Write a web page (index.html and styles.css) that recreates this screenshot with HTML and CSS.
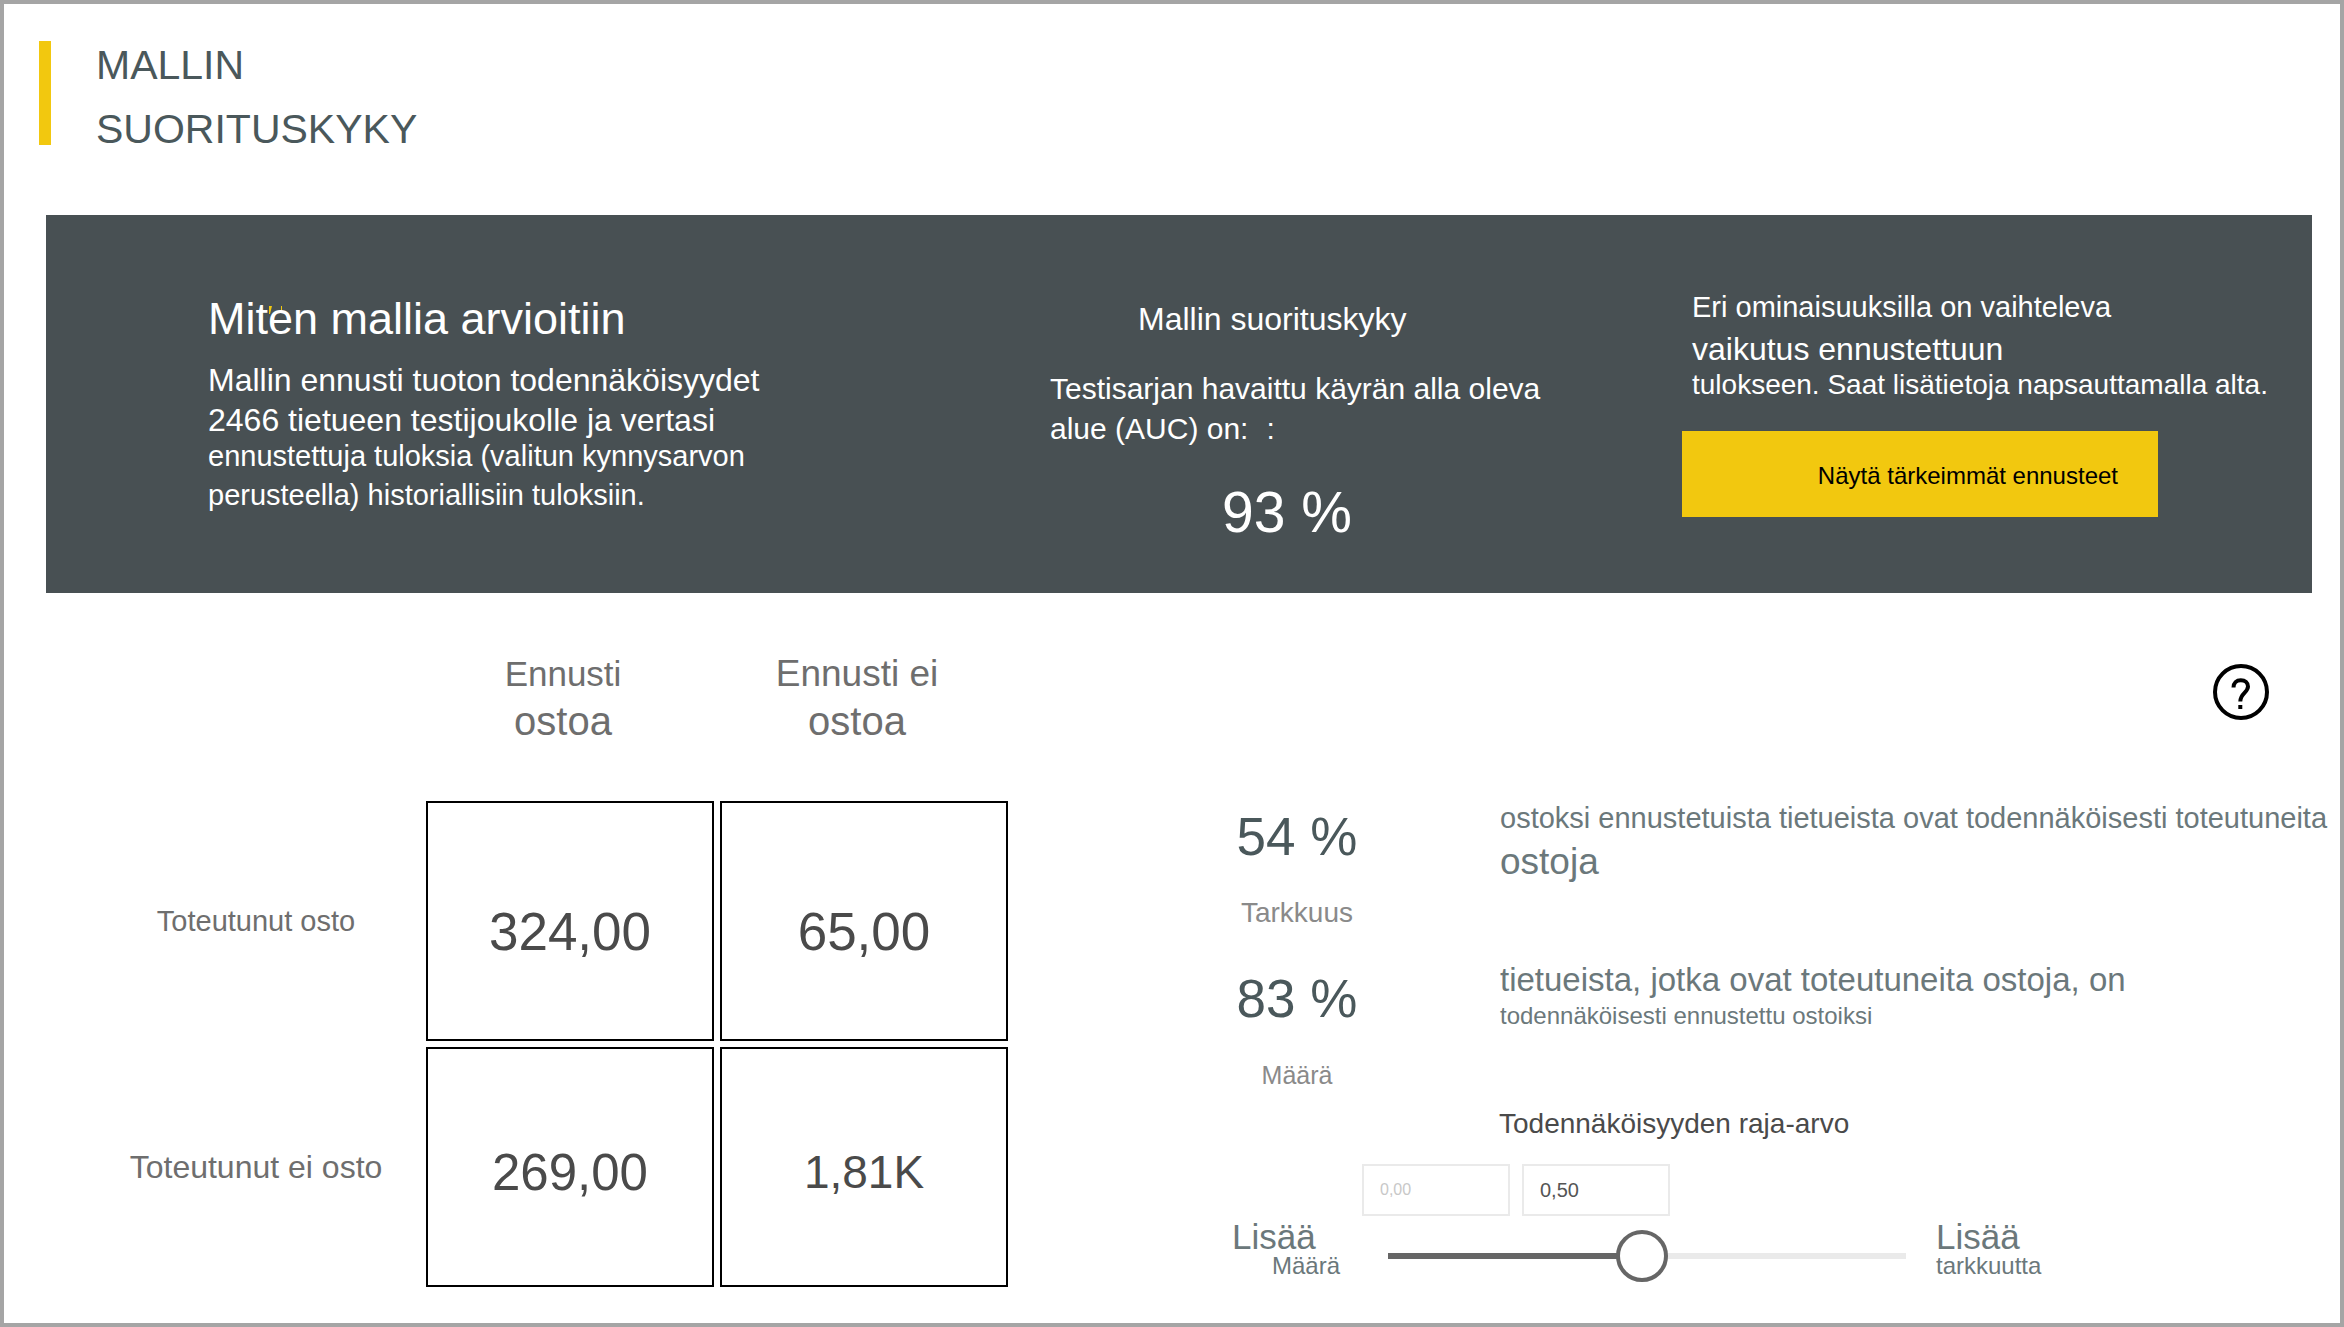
FILE: index.html
```html
<!DOCTYPE html>
<html lang="fi">
<head>
<meta charset="utf-8">
<meta name="viewport" content="width=device-width, initial-scale=1">
<title>Mallin suorituskyky</title>
<link rel="stylesheet" href="styles.css">
</head>
<body>
<div class="report">
  <header class="page-header">
    <h1 class="page-title"><span class="line">MALLIN</span><span class="line">SUORITUSKYKY</span></h1>
  </header>

  <section class="summary">
    <div class="summary-col summary-method">
      <h2 class="method-title">Miten mallia arvioitiin
        <svg class="spark" viewBox="0 0 14 9" aria-hidden="true"><path d="M0 0h3L1 8H0zM12 0h1v4h-1z" fill="#f2c80f"/></svg>
      </h2>
      <p class="method-text">
        <span class="line lead">Mallin ennusti tuoton todennäköisyydet</span>
        <span class="line lead">2466 tietueen testijoukolle ja vertasi</span>
        <span class="line tight">ennustettuja tuloksia (valitun kynnysarvon</span>
        <span class="line loose">perusteella) historiallisiin tuloksiin.</span>
      </p>
    </div>
    <div class="summary-col summary-auc">
      <h2 class="auc-title">Mallin suorituskyky</h2>
      <p class="auc-text"><span class="line">Testisarjan havaittu käyrän alla oleva</span><span class="line">alue (AUC) on:<span class="auc-colon">:</span></span></p>
      <p class="auc-value">93 %</p>
    </div>
    <div class="summary-col summary-features">
      <p class="features-text">
        <span class="line first">Eri ominaisuuksilla on vaihteleva</span>
        <span class="line second">vaikutus ennustettuun</span>
        <span class="line third">tulokseen. Saat lisätietoja napsauttamalla alta.</span>
      </p>
      <button class="features-button" type="button">Näytä tärkeimmät ennusteet</button>
    </div>
  </section>

  <main class="details">
    <table class="matrix">
      <colgroup><col><col class="value-col"><col class="value-col"></colgroup>
      <thead>
        <tr>
          <td></td>
          <th scope="col"><span class="line">Ennusti</span><span class="line sub">ostoa</span></th>
          <th scope="col"><span class="line wide">Ennusti ei</span><span class="line sub">ostoa</span></th>
        </tr>
      </thead>
      <tbody>
        <tr class="row-positive"><th scope="row">Toteutunut osto</th><td>324,00</td><td>65,00</td></tr>
        <tr class="row-negative"><th scope="row">Toteutunut ei osto</th><td>269,00</td><td class="compact">1,81K</td></tr>
      </tbody>
    </table>

    <section class="quality">
      <button class="help" type="button" aria-label="Ohje">
        <svg viewBox="0 0 56 56" fill="none" stroke="#000" aria-hidden="true">
          <circle cx="28" cy="28" r="26" stroke-width="4"/>
          <path d="M20.500 23.500C20.500 19 23.500 16.300 27.800 16.300C32.200 16.300 35 19 35 22.600C35 28.500 27.300 29 27.300 37.600" stroke-width="4"/>
          <path d="M27.300 41v4" stroke-width="4"/>
        </svg>
      </button>

      <div class="metrics">
        <div class="metric"><strong class="metric-value">54 %</strong><span class="metric-name">Tarkkuus</span></div>
        <p class="metric-text"><span class="line small">ostoksi ennustetuista tietueista ovat todennäköisesti toteutuneita</span><span class="line large">ostoja</span></p>
        <div class="metric"><strong class="metric-value">83 %</strong><span class="metric-name short">Määrä</span></div>
        <p class="metric-text"><span class="line medium">tietueista, jotka ovat toteutuneita ostoja, on</span><span class="line tiny">todennäköisesti ennustettu ostoiksi</span></p>
      </div>

      <label class="threshold-label" for="threshold">Todennäköisyyden raja-arvo</label>
      <div class="range-inputs">
        <input class="range-input from" type="text" value="0,00" aria-label="Alaraja" disabled>
        <input class="range-input to" type="text" value="0,50" aria-label="Raja-arvo">
      </div>
      <div class="slider-row">
        <p class="slider-end start"><span class="line more">Lisää</span><span class="line what">Määrä</span></p>
        <input class="slider" id="threshold" type="range" min="0" max="1" step="0.01" value="0.49">
        <p class="slider-end"><span class="line more">Lisää</span><span class="line what">tarkkuutta</span></p>
      </div>
    </section>
  </main>
</div>
</body>
</html>
```
FILE: styles.css
```css
* { box-sizing: border-box; }

body {
  margin: 0;
  background: #fff;
  color: #6b787b;
  font-family: "Liberation Sans", Arial, sans-serif;
}

h1, h2, p { margin: 0; font-weight: 400; }
button, input { font-family: inherit; }

.report {
  min-height: 100vh;
  border: 4px solid #a5a5a5;
}

.line { display: block; white-space: nowrap; }

/* Page title */
.page-header {
  display: flex;
  gap: 45px;
  padding: 29px 35px 54px;
}
.page-header::before {
  content: "";
  width: 12px;
  height: 104px;
  margin-top: 8px;
  background: #f2c80f;
}
.page-title {
  color: #4a585b;
  font-size: 41px;
  line-height: 64px;
}

/* Dark summary band */
.summary {
  display: grid;
  grid-template-columns: 842fr 632fr 630fr;
  margin: 0 28px 0 42px;
  padding: 70px 0 49px 162px;
  background: #485053;
  color: #fff;
}
.summary-method { padding-top: 4px; }
.method-title {
  position: relative;
  margin-bottom: 11px;
  font-size: 45px;
  line-height: 60px;
  white-space: nowrap;
}
.spark {
  position: absolute;
  left: 61px;
  top: 17px;
  width: 14px;
  height: 9px;
}
.method-text .lead { font-size: 32px; line-height: 40px; }
.method-text .tight { font-size: 29px; line-height: 32px; }
.method-text .loose { font-size: 29px; line-height: 46px; }

.summary-auc { padding-top: 14px; }
.auc-title {
  margin-bottom: 30px;
  padding-left: 88px;
  font-size: 32px;
  line-height: 40px;
}
.auc-text { font-size: 30px; line-height: 40px; }
.auc-colon { margin-left: 18px; }
.auc-value {
  margin-top: 31px;
  padding-left: 172px;
  font-size: 57px;
  line-height: 64px;
}

.features-text { padding-left: 10px; }
.features-text .first { font-size: 29px; line-height: 44px; }
.features-text .second { font-size: 32px; line-height: 40px; }
.features-text .third { font-size: 28px; line-height: 32px; }
.features-button {
  display: block;
  width: 476px;
  height: 86px;
  margin-top: 30px;
  padding: 4px 40px 0 0;
  border: 0;
  background: #f2c80f;
  color: #000;
  font-size: 24px;
  text-align: right;
}

/* Lower half: confusion matrix and quality metrics */
.details {
  display: grid;
  grid-template-columns: 968fr 1326fr;
  align-items: start;
  margin: 50px 0 0 42px;
}

.matrix {
  width: 100%;
  table-layout: fixed;
  border-spacing: 6px;
}
.matrix th, .matrix td { padding: 0; font-weight: 400; text-align: center; }
.value-col { width: 288px; }
.matrix thead th {
  padding: 0 14px 52px 0;
  color: #6e6e6e;
  font-size: 35px;
  line-height: 50px;
}
.matrix .wide { font-size: 37px; }
.matrix .sub { font-size: 40px; line-height: 44px; }
.matrix tbody tr { height: 240px; }
.matrix tbody th {
  padding-left: 40px;
  color: #6e6e6e;
  font-size: 29px;
  white-space: nowrap;
}
.matrix .row-negative th { font-size: 32px; }
.matrix tbody td {
  padding-top: 20px;
  border: 2px solid #000;
  color: #4a4a4a;
  font-size: 53px;
}
.matrix .row-negative td { padding-top: 10px; font-size: 51px; }
.matrix .row-negative .compact { font-size: 46px; }

.quality { padding-left: 186px; }
.help {
  display: block;
  width: 56px;
  height: 56px;
  margin: 21px 71px 0 auto;
  padding: 0;
  border: 0;
  background: none;
}
.help svg { display: block; }

.metrics {
  display: grid;
  grid-template-columns: 194px 1fr;
  gap: 31px 106px;
  margin-top: 78px;
}
.metric { padding-top: 9px; text-align: center; }
.metric-value {
  display: block;
  color: #4a585b;
  font-size: 53px;
  font-weight: 400;
  line-height: 60px;
}
.metric-name {
  display: block;
  margin-top: 30px;
  color: #8a8a8a;
  font-size: 28px;
  line-height: 32px;
}
.metric-name.short { font-size: 25px; }
.metric-text .small { font-size: 29px; line-height: 40px; }
.metric-text .large { font-size: 37px; line-height: 48px; }
.metric-text .medium { font-size: 33px; line-height: 40px; }
.metric-text .tiny { font-size: 24px; line-height: 32px; }

/* Probability threshold */
.threshold-label {
  display: block;
  margin: 17px 0 24px 299px;
  color: #4a4a4a;
  font-size: 28px;
  line-height: 32px;
}
.range-inputs {
  display: flex;
  gap: 12px;
  padding-left: 162px;
}
.range-input {
  width: 148px;
  height: 52px;
  padding: 0 16px;
  border: 2px solid #eaeaea;
  background: #fff;
  color: #555;
  font-size: 20px;
}
.range-input.from { color: #c8c8c8; font-size: 16px; }

.slider-row {
  display: grid;
  grid-template-columns: 126px minmax(0, 518px) auto;
  gap: 30px;
  align-items: start;
  justify-content: start;
  margin-top: 4px;
  padding-left: 32px;
}
.slider-end .more { font-size: 35px; line-height: 34px; }
.slider-end .what { font-size: 24px; line-height: 24px; }
.slider-end.start .what { padding-left: 40px; }

.slider {
  width: 100%;
  height: 52px;
  margin: 10px 0 0;
  appearance: none;
  background: linear-gradient(to right, #666 50%, #eaeaea 50%) center / 100% 6px no-repeat;
}
.slider::-webkit-slider-thumb {
  width: 52px;
  height: 52px;
  appearance: none;
  border: 4px solid #666;
  border-radius: 50%;
  background: #fff;
}
```
